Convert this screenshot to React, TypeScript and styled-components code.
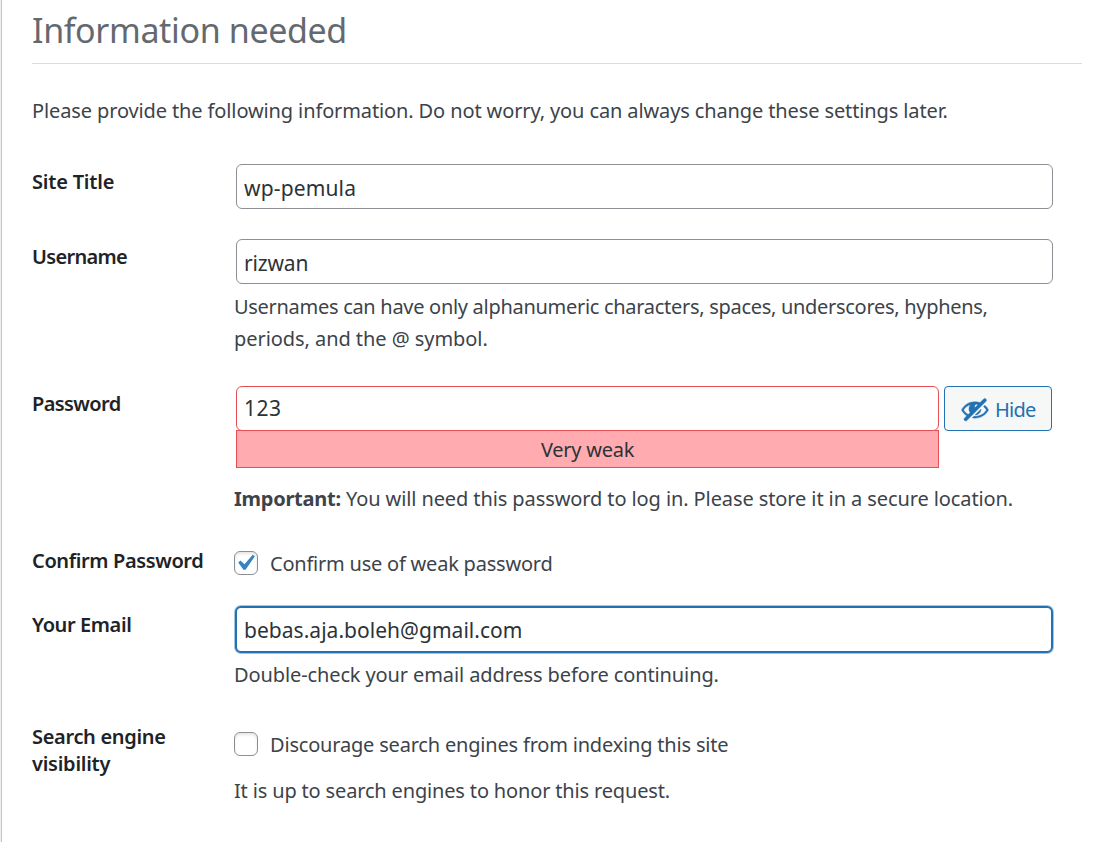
import React from "react";
import styled, { createGlobalStyle } from "styled-components";

const Base = createGlobalStyle`
  *, *::before, *::after { box-sizing: border-box; }
  body { margin: 0; background: #f0f0f1; font-family: "Noto Sans", "Open Sans", sans-serif; font-size: 20px; color: #3c434a; }
`;

const Page = styled.main`
  margin-left: 1px;
  width: 1108px;
  height: 842px;
  overflow: hidden;
  padding: 0 27px 0 30px;
  background: #fff;
  border-left: 1px solid #c3c4c7;
`;

const Text = styled.span<{ $spacing?: number }>`
  letter-spacing: ${p => p.$spacing ?? 0}px;
  white-space: nowrap;
`;

const Strong = styled(Text).attrs({ as: "strong" })`
  font-weight: 700;
`;

const Title = styled.h1`
  margin: 0;
  height: 64px;
  line-height: 60px;
  font-size: 34px;
  font-weight: 400;
  color: #646970;
  border-bottom: 1px solid #dcdcde;
`;

const Intro = styled.p`
  margin: 0;
  padding-top: 31px;
  height: 100px;
  line-height: 32px;
`;

const Row = styled.div<{ $height: number }>`
  display: grid;
  grid-template-columns: 202px 820px;
  height: ${p => p.$height}px;
`;

const Label = styled.label<{ $top?: number }>`
  padding-top: ${p => p.$top ?? 4}px;
  line-height: 27px;
  font-weight: 600;
  color: #1d2327;
`;

const Field = styled.div<{ $top?: number }>`
  padding-top: ${p => p.$top ?? 0}px;
`;

const Input = styled.input<{ $spacing?: number }>`
  display: block;
  width: 817px;
  height: 45px;
  margin: 0 0 0 2px;
  padding: 2px 7px 0;
  border: 1px solid #8c8f94;
  border-radius: 6px;
  background: #fff;
  color: #2c3338;
  font: inherit;
  font-size: 21px;
  letter-spacing: ${p => p.$spacing ?? 0}px;
  outline: none;
`;

const WeakInput = styled(Input)`
  width: 703px;
  padding-top: 0;
  padding-bottom: 1px;
  border-color: #e65054;
`;

const FocusedInput = styled(Input)`
  width: 818px;
  height: 47px;
  margin: 0 0 1px 1px;
  padding: 0 7px;
  border: 2px solid #2271b1;
  box-shadow: 0 0 0 1px rgba(34, 113, 177, 0.4);
`;

const Help = styled.p<{ $top?: number }>`
  margin: 0;
  padding-top: ${p => p.$top ?? 6}px;
  line-height: 32px;
`;

const PasswordLine = styled.div`
  display: flex;
  gap: 5px;
`;

const Strength = styled.div`
  width: 703px;
  height: 38px;
  margin: -1px 0 0 2px;
  line-height: 37px;
  text-align: center;
  border: 1px solid #e65054;
  background: #ffabaf;
  color: #2c3338;
`;

const Toggle = styled.button`
  display: flex;
  align-items: center;
  gap: 5px;
  width: 108px;
  height: 45px;
  padding: 1px 0 0 15px;
  border: 1px solid #2271b1;
  border-radius: 4px;
  background: #f6f7f7;
  color: #2271b1;
  font: inherit;
`;

const EyeIcon = styled.svg`
  flex: none;
  width: 30px;
  height: 30px;
  fill: currentColor;
  stroke: currentColor;
  stroke-width: 0.25;
`;

const CheckLine = styled.label`
  display: flex;
  align-items: center;
  gap: 12px;
  height: 32px;
`;

const Box = styled.span`
  display: flex;
  align-items: center;
  justify-content: center;
  width: 24px;
  height: 24px;
  border: 1px solid #8c8f94;
  border-radius: 6px;
  background: #fff;
  box-shadow: inset 0 2px 3px rgba(0, 0, 0, 0.1);
`;

const Tick = styled.svg`
  flex: none;
  width: 32px;
  height: 32px;
  margin-right: 2px;
  fill: #3582c4;
`;

export default function App() {
  return (
    <>
      <Base />
      <Page>
        <Title><Text $spacing={-0.37}>Information needed</Text></Title>
        <Intro>
          <Text $spacing={-0.12}>Please provide the following information. Do not worry, you can always change these settings later.</Text>
        </Intro>

        <Row $height={75}>
          <Label><Text $spacing={-0.2}>Site Title</Text></Label>
          <Field><Input readOnly value="wp-pemula" $spacing={0.15} /></Field>
        </Row>

        <Row $height={147}>
          <Label><Text $spacing={-0.7}>Username</Text></Label>
          <Field>
            <Input readOnly value="rizwan" $spacing={-0.15} />
            <Help $top={7}>
              <Text $spacing={-0.295}>Usernames can have only alphanumeric characters, spaces, underscores, hyphens,</Text>
              <br />
              <Text $spacing={-0.06}>periods, and the @ symbol.</Text>
            </Help>
          </Field>
        </Row>

        <Row $height={161}>
          <Label><Text $spacing={-0.6}>Password</Text></Label>
          <Field>
            <PasswordLine>
              <WeakInput readOnly value="123" $spacing={0.5} />
              <Toggle>
                <EyeIcon viewBox="0 0 20 20">
                  <path d="M17.2 3.3l.16.17c.39.39.39 1.02 0 1.41L4.55 17.7c-.39.39-1.03.39-1.41 0l-.17-.17c-.39-.39-.39-1.02 0-1.41l1.59-1.6c-1.57-1-2.76-2.3-3.56-3.93.81-1.65 2.03-2.98 3.64-3.99S8.04 5.09 10 5.09c1.2 0 2.33.21 3.4.6l2.38-2.39c.39-.39 1.03-.39 1.42 0zm-7.09 4.01c-.23.25-.34.54-.34.88 0 .31.12.58.31.81l1.8-1.79c-.13-.12-.28-.21-.45-.26-.11-.01-.28-.03-.49-.04-.33.03-.6.16-.83.4zM2.4 10.59c.69 1.23 1.71 2.25 3.05 3.05l1.28-1.28c-.51-.69-.77-1.47-.77-2.36 0-1.06.36-1.98 1.09-2.76-1.04.27-1.96.7-2.76 1.26-.8.58-1.43 1.27-1.89 2.09zm13.22-2.13l.96-.96c1.02.86 1.83 1.89 2.42 3.09-.81 1.65-2.03 2.98-3.64 3.99s-3.4 1.51-5.36 1.51c-.63 0-1.24-.07-1.83-.18l1.07-1.07c.25.02.5.05.76.05 1.63 0 3.13-.4 4.5-1.21s2.4-1.84 3.1-3.09c-.46-.82-1.09-1.51-1.89-2.09-.03-.01-.06-.02-.09-.04zm-5.58 5.58l4-4c-.01 1.1-.41 2.04-1.18 2.81-.78.78-1.72 1.18-2.82 1.19z" />
                </EyeIcon>
                <Text $spacing={-0.8}>Hide</Text>
              </Toggle>
            </PasswordLine>
            <Strength><Text $spacing={-0.25}>Very weak</Text></Strength>
            <Help $top={15}>
              <Strong $spacing={-0.25}>Important:</Strong>
              <Text $spacing={-0.1}> You will need this password to log in. Please store it in a secure location.</Text>
            </Help>
          </Field>
        </Row>

        <Row $height={59}>
          <Label $top={0}><Text $spacing={-0.38}>Confirm Password</Text></Label>
          <Field>
            <CheckLine>
              <Box><Tick viewBox="0 0 20 20"><path d="M14.83 4.89l1.34.94-5.81 8.38H9.02L5.78 9.67l1.34-1.25 2.57 2.4z" /></Tick></Box>
              <Text $spacing={-0.22}>Confirm use of weak password</Text>
            </CheckLine>
          </Field>
        </Row>

        <Row $height={115}>
          <Label $top={5}><Text $spacing={-0.4}>Your Email</Text></Label>
          <Field>
            <FocusedInput readOnly value="bebas.aja.boleh@gmail.com" $spacing={0.03} />
            <Help $top={5}><Text $spacing={-0.11}>Double-check your email address before continuing.</Text></Help>
          </Field>
        </Row>

        <Row $height={115}>
          <Label $top={2}>
            <Text $spacing={-0.32}>Search engine</Text>
            <br />
            <Text $spacing={-0.25}>visibility</Text>
          </Label>
          <Field $top={7}>
            <CheckLine>
              <Box />
              <Text $spacing={-0.19}>Discourage search engines from indexing this site</Text>
            </CheckLine>
            <Help $top={15}><Text $spacing={-0.16}>It is up to search engines to honor this request.</Text></Help>
          </Field>
        </Row>
      </Page>
    </>
  );
}
